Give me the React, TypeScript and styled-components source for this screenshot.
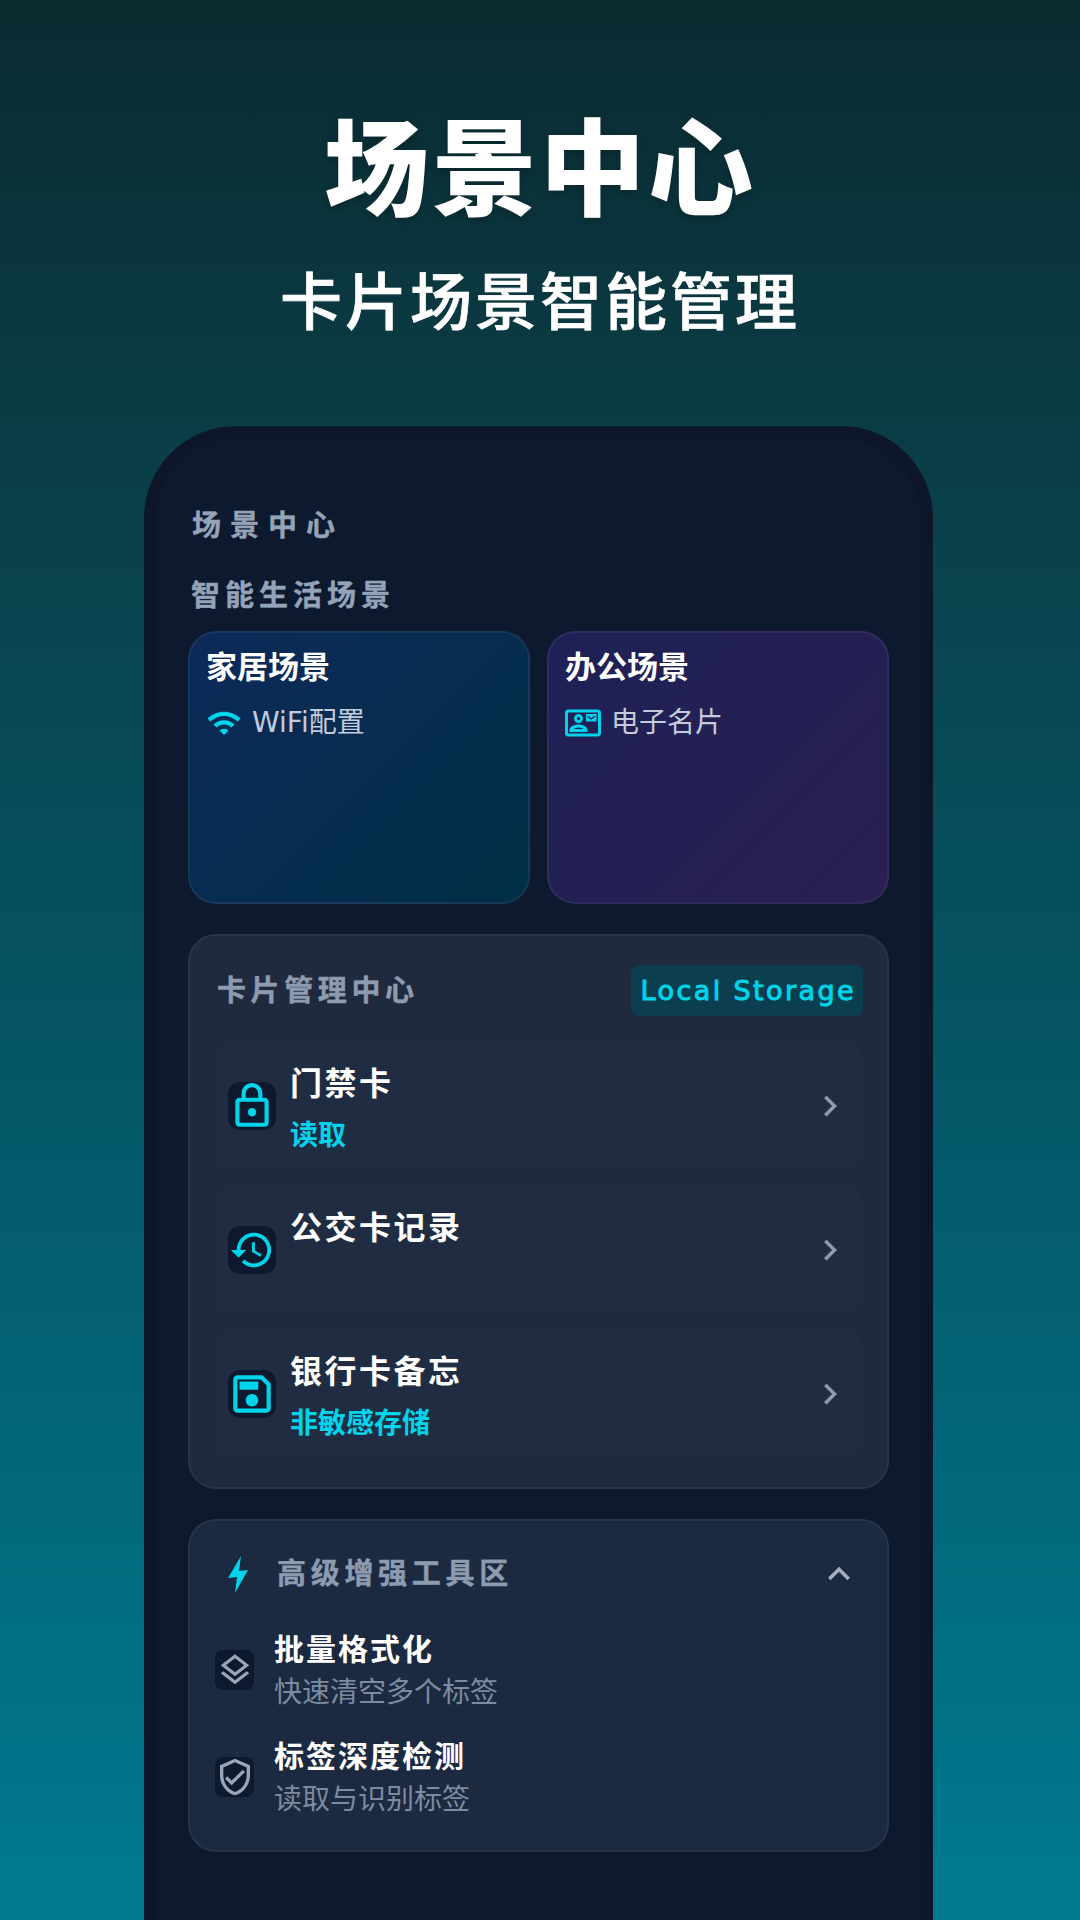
import React from 'react';
import styled, { createGlobalStyle } from 'styled-components';
import {
  MdChevronRight,
  MdHistory,
  MdKeyboardArrowUp,
  MdOutlineContactMail,
  MdOutlineLayers,
  MdOutlineLock,
  MdOutlineSave,
  MdOutlineVerifiedUser,
  MdWifi,
} from 'react-icons/md';

const GlobalStyle = createGlobalStyle`
  html, body {
    margin: 0;
    padding: 0;
    background: #07505e;
  }
  * {
    box-sizing: border-box;
  }
`;

const Page = styled.div`
  width: 1080px;
  height: 1920px;
  overflow: hidden;
  display: flex;
  flex-direction: column;
  align-items: center;
  padding-top: 99px;
  background: linear-gradient(180deg, #0b2a30 0%, #0a3f49 25%, #045a6a 60%, #007a90 100%);
  font-family: 'DejaVu Sans', 'Noto Sans CJK SC', sans-serif;
`;

const Title = styled.h1`
  margin: 0;
  font-size: 105px;
  line-height: 124px;
  font-weight: 900;
  letter-spacing: 3px;
  color: #fff;
  font-family: 'Noto Sans CJK SC', sans-serif;
  text-shadow: 0 4px 10px rgba(0, 0, 0, 0.2);
`;

const Subtitle = styled.h2`
  margin: 37px 0 0;
  font-size: 62px;
  line-height: 76px;
  font-weight: 500;
  letter-spacing: 3px;
  color: #fff;
  font-family: 'Noto Sans CJK SC', sans-serif;
  -webkit-text-stroke: 0.7px #fff;
`;

const Phone = styled.div`
  margin-top: 90px;
  margin-right: 3px;
  width: 789px;
  flex: 1;
  border: 12px solid #0d1729;
  border-bottom: 0;
  border-radius: 92px 92px 0 0;
  background: #0c192e;
  padding: 68px 32px 0;
  display: flex;
  flex-direction: column;
`;

const ScreenLabel = styled.div`
  margin-left: 4px;
  font-size: 29px;
  line-height: 40px;
  font-weight: 700;
  letter-spacing: 9px;
  color: #94a3b8;
  -webkit-text-stroke: 0.4px #94a3b8;
`;

const SectionLabel = styled.div`
  margin-top: 30px;
  margin-left: 3px;
  font-size: 29px;
  line-height: 40px;
  font-weight: 700;
  letter-spacing: 5px;
  color: #94a3b8;
  -webkit-text-stroke: 0.4px #94a3b8;
`;

const SceneGrid = styled.div`
  margin-top: 15px;
  display: grid;
  grid-template-columns: 342px 342px;
  gap: 17px;
`;

const SceneCard = styled.div<{ $tone: 'blue' | 'purple' }>`
  height: 273px;
  border-radius: 28px;
  border: 2px solid rgba(255, 255, 255, 0.06);
  padding: 14px 16px;
  background: ${(p) =>
    p.$tone === 'blue'
      ? 'linear-gradient(135deg, #0d2a5a 0%, #002f45 100%)'
      : 'linear-gradient(135deg, #1e2157 0%, #2a1f50 100%)'};
`;

const SceneTitle = styled.div`
  font-size: 31px;
  line-height: 40px;
  font-weight: 700;
  color: #fff;
`;

const SceneItem = styled.div`
  margin-top: 16px;
  display: flex;
  align-items: center;
  gap: 10px;
  font-size: 28px;
  line-height: 40px;
  color: #c3cbdc;
  svg {
    color: #00d4ea;
    flex: none;
  }
`;

const Panel = styled.div`
  margin-top: 30px;
  border-radius: 28px;
  border: 2px solid #283548;
  background: #1f2a3e;
`;

const CardPanel = styled(Panel)`
  height: 555px;
  padding: 29px 24px 0 27px;
`;

const PanelHeader = styled.div`
  display: flex;
  align-items: center;
  justify-content: space-between;
`;

const PanelTitle = styled.div`
  font-size: 29px;
  line-height: 40px;
  font-weight: 700;
  letter-spacing: 4.6px;
  color: #8d9bb0;
  -webkit-text-stroke: 0.4px #8d9bb0;
`;

const Badge = styled.div`
  height: 51px;
  padding: 0 7px 0 10px;
  border-radius: 8px;
  display: flex;
  align-items: center;
  background: #0b3f50;
  color: #00d4ea;
  font-size: 27px;
  letter-spacing: 2.4px;
  -webkit-text-stroke: 1px #00d4ea;
`;

const CardList = styled.div`
  margin: 25px 0 0 -2px;
  display: flex;
  flex-direction: column;
  gap: 15px;
`;

const CardRow = styled.div`
  height: 129px;
  border-radius: 18px;
  background: #1f2c41;
  display: flex;
  align-items: center;
  padding: 0 12px 0 13px;
`;

const IconBox = styled.div`
  flex: none;
  width: 48px;
  height: 48px;
  border-radius: 12px;
  background: #0c192e;
  display: flex;
  align-items: center;
  justify-content: center;
  color: #00d4ea;
  svg {
    flex: none;
  }
`;

const RowText = styled.div`
  margin-left: 14px;
  flex: 1;
  align-self: flex-start;
  padding-top: 23px;
`;

const RowTitle = styled.div`
  font-size: 32px;
  line-height: 40px;
  font-weight: 700;
  letter-spacing: 2.5px;
  color: #fff;
`;

const RowTag = styled.div`
  margin-top: 15px;
  height: 34px;
  font-size: 28px;
  line-height: 34px;
  font-weight: 700;
  color: #00d4ea;
`;

const Chevron = styled(MdChevronRight)`
  color: #8d9bb0;
`;

const ToolPanel = styled(Panel)`
  height: 333px;
  padding: 31px 26px 0 26px;
  background: #1b2a40;
`;

const ToolHeader = styled.div`
  display: flex;
  align-items: center;
  color: #00d4ea;
`;

const BoltIcon = styled.svg`
  flex: none;
  width: 20px;
  height: 37px;
  margin-left: 12px;
`;

const ToolHeading = styled(PanelTitle)`
  margin-left: 29px;
  flex: 1;
  letter-spacing: 4.7px;
`;

const ArrowUp = styled(MdKeyboardArrowUp)`
  color: #a3aec0;
`;

const ToolList = styled.div`
  padding-top: 7px;
`;

const ToolRow = styled.div`
  margin-top: 27px;
  margin-left: -1px;
  display: flex;
  align-items: center;
  gap: 20px;
`;

const ToolIcon = styled(IconBox)`
  width: 39px;
  height: 40px;
  border-radius: 8px;
  color: #9aa6b8;
`;

const ToolTitle = styled.div`
  font-size: 30px;
  line-height: 40px;
  font-weight: 700;
  letter-spacing: 2px;
  color: #fff;
`;

const ToolSub = styled.div`
  margin-top: 6px;
  font-size: 28px;
  line-height: 34px;
  color: #7d8ba0;
`;

const cards = [
  { title: '门禁卡', tag: '读取', icon: <MdOutlineLock size={50} /> },
  { title: '公交卡记录', tag: '', icon: <MdHistory size={46} /> },
  { title: '银行卡备忘', tag: '非敏感存储', icon: <MdOutlineSave size={50} /> },
];

const tools = [
  { title: '批量格式化', sub: '快速清空多个标签', icon: <MdOutlineLayers size={38} /> },
  { title: '标签深度检测', sub: '读取与识别标签', icon: <MdOutlineVerifiedUser size={40} /> },
];

export default function App() {
  return (
    <Page>
      <GlobalStyle />
      <Title>场景中心</Title>
      <Subtitle>卡片场景智能管理</Subtitle>
      <Phone>
        <ScreenLabel>场景中心</ScreenLabel>
        <SectionLabel>智能生活场景</SectionLabel>
        <SceneGrid>
          <SceneCard $tone="blue">
            <SceneTitle>家居场景</SceneTitle>
            <SceneItem>
              <MdWifi size={36} />
              WiFi配置
            </SceneItem>
          </SceneCard>
          <SceneCard $tone="purple">
            <SceneTitle>办公场景</SceneTitle>
            <SceneItem>
              <MdOutlineContactMail size={36} />
              电子名片
            </SceneItem>
          </SceneCard>
        </SceneGrid>
        <CardPanel>
          <PanelHeader>
            <PanelTitle>卡片管理中心</PanelTitle>
            <Badge>Local Storage</Badge>
          </PanelHeader>
          <CardList>
            {cards.map((card) => (
              <CardRow key={card.title}>
                <IconBox>{card.icon}</IconBox>
                <RowText>
                  <RowTitle>{card.title}</RowTitle>
                  <RowTag>{card.tag}</RowTag>
                </RowText>
                <Chevron size={42} />
              </CardRow>
            ))}
          </CardList>
        </CardPanel>
        <ToolPanel>
          <ToolHeader>
            <BoltIcon viewBox="0 0 20 37">
              <polygon points="13,0 0,22 9,21 7,37 20,14 11,15" fill="currentColor" />
            </BoltIcon>
            <ToolHeading>高级增强工具区</ToolHeading>
            <ArrowUp size={44} />
          </ToolHeader>
          <ToolList>
            {tools.map((tool) => (
              <ToolRow key={tool.title}>
                <ToolIcon>{tool.icon}</ToolIcon>
                <div>
                  <ToolTitle>{tool.title}</ToolTitle>
                  <ToolSub>{tool.sub}</ToolSub>
                </div>
              </ToolRow>
            ))}
          </ToolList>
        </ToolPanel>
      </Phone>
    </Page>
  );
}
